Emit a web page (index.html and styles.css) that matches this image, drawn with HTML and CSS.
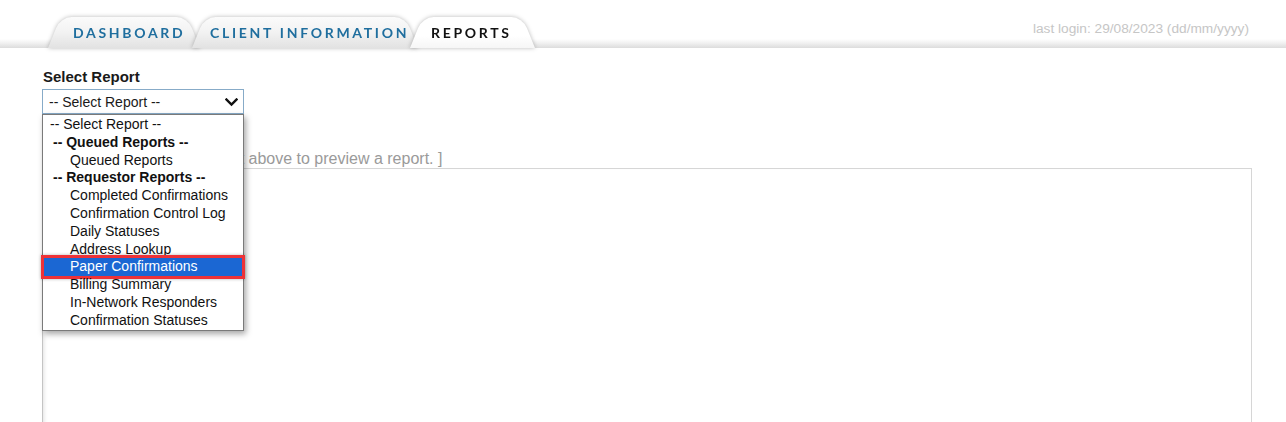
FILE: index.html
```html
<!DOCTYPE html>
<html lang="en">
<head>
<meta charset="utf-8">
<title>Reports</title>
<link rel="stylesheet" href="styles.css">
</head>
<body>
<header class="topbar">
  <nav class="tabs">
    <a class="tab tab-dashboard"><span class="tab-label">DASHBOARD</span></a>
    <a class="tab tab-client"><span class="tab-label">CLIENT INFORMATION</span></a>
    <a class="tab tab-reports is-active"><span class="tab-label">REPORTS</span></a>
  </nav>
  <div class="last-login">last login: 29/08/2023 (dd/mm/yyyy)</div>
</header>
<main class="content">
  <div class="field-label">Select Report</div>
  <div class="select-wrap">
    <div class="select">
      <span>-- Select Report --</span>
      <svg class="chevron" width="13" height="9" viewBox="0 0 13 9"><path d="M1.5 1.5 L6.5 6.5 L11.5 1.5" fill="none" stroke="#111" stroke-width="2.4" stroke-linecap="square"/></svg>
    </div>
    <ul class="dropdown">
      <li class="opt opt-top">-- Select Report --</li>
      <li class="opt opt-group">-- Queued Reports --</li>
      <li class="opt">Queued Reports</li>
      <li class="opt opt-group">-- Requestor Reports --</li>
      <li class="opt">Completed Confirmations</li>
      <li class="opt">Confirmation Control Log</li>
      <li class="opt">Daily Statuses</li>
      <li class="opt">Address Lookup</li>
      <li class="opt is-selected">Paper Confirmations</li>
      <li class="opt">Billing Summary</li>
      <li class="opt">In-Network Responders</li>
      <li class="opt">Confirmation Statuses</li>
    </ul>
  </div>
  <p class="hint">[ Select a report from the list above to preview a report. ]</p>
  <div class="preview"></div>
</main>
</body>
</html>
```
FILE: styles.css
```css
* { box-sizing: border-box; }
html, body { margin: 0; padding: 0; background: #fff; }
body { font-family: "Liberation Sans", Arial, sans-serif; color: #111; overflow: hidden; }

.topbar {
  height: 49px;
  display: flex;
  align-items: flex-start;
  background: linear-gradient(to bottom, #fff 0, #fff 39px, #f1f1f1 43px, #dcdcdc 48px, #fff 48px, #fff 49px);
}

.tabs {
  display: flex;
  align-items: flex-end;
  height: 48px;
  padding-left: 48px;
}

.tab {
  position: relative;
  height: 31px;
  display: flex;
  align-items: center;
  padding: 0 0 1px 0;
  filter: drop-shadow(0 0 2px rgba(0,0,0,0.28));
  cursor: pointer;
}
.tab::before, .tab::after {
  content: "";
  position: absolute;
  top: 0;
  bottom: 0;
  width: 60%;
  background: linear-gradient(to bottom, #fbfbfb 0%, #f2f2f2 50%, #e2e2e2 100%);
  transform-origin: bottom;
  z-index: -1;
}
.tab::before { left: 0; transform: skewX(-22deg); border-radius: 11px 0 0 0; }
.tab::after { right: 0; transform: skewX(22deg); border-radius: 0 11px 0 0; }

.tab-label {
  font-family: Lato, "Open Sans", sans-serif;
  font-weight: 700;
  font-size: 14px;
  letter-spacing: 2.7px;
  color: #1f6e9e;
}

.tab-dashboard { z-index: 1; padding-left: 25px; width: 152px; }
.tab-client { z-index: 2; padding-left: 18px; width: 226px; margin-left: -8px; }
.tab-reports { z-index: 3; padding-left: 21px; width: 125px; margin-left: -8px; }
.tab.is-active::before, .tab.is-active::after {
  background: linear-gradient(to bottom, #fff 0%, #fff 60%, #f6f6f6 100%);
}
.tab.is-active .tab-label { color: #111; }

.last-login {
  margin-left: auto;
  padding: 21px 37px 0 0;
  font-size: 13.7px;
  color: #c6c6c6;
}

.content {
  padding: 20px 34px 0 42px;
}

.field-label {
  font-weight: 700;
  font-size: 15px;
  line-height: 16px;
  color: #1a1a1a;
  margin-bottom: 4px;
  padding-left: 1px;
}

.select-wrap {
  position: relative;
  width: 202px;
}

.select {
  height: 25px;
  border: 1px solid #87abc8;
  display: flex;
  align-items: center;
  justify-content: space-between;
  padding: 0 5px 0 6px;
  font-size: 14px;
  color: #1a1a1a;
  background: #fff;
}
.chevron { display: block; margin-top: 1px; }

.dropdown {
  position: absolute;
  top: 25px;
  left: 0;
  width: 202px;
  margin: 0;
  padding: 1px 0 0 0;
  list-style: none;
  background: #fff;
  border: 1px solid #7a7a7a;
  box-shadow: 2px 3px 6px rgba(0,0,0,0.35);
  z-index: 5;
}

.opt {
  position: relative;
  height: 17.8px;
  line-height: 17.8px;
  font-size: 14px;
  padding-left: 27px;
  color: #111;
  white-space: nowrap;
}
.opt-top { padding-left: 7px; }
.opt-group { padding-left: 10px; font-weight: 700; }
.opt.is-selected { background: #1b67d3; color: #fff; }
.opt.is-selected::after {
  content: "";
  position: absolute;
  left: -2px;
  right: -2px;
  top: -3px;
  bottom: -3px;
  border: 3px solid #ee3237;
  box-shadow: 0 0 3px rgba(0,0,0,0.3);
}

.hint {
  margin: 36px 0 0 0;
  padding-left: 2px;
  font-size: 16px;
  line-height: 18px;
  color: #9a9a9a;
}

.preview {
  height: 260px;
  border: 1px solid #d6d6d6;
  border-left-color: #c4c4c4;
  box-shadow: inset 4px 0 4px -3px rgba(0,0,0,0.12);
}
```
